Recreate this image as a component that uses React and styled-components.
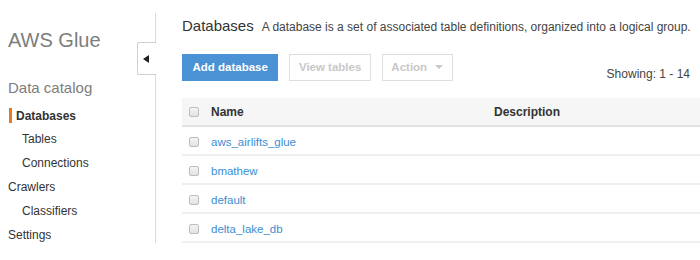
import React from 'react';
import styled, { createGlobalStyle } from 'styled-components';

const GlobalStyle = createGlobalStyle`
  body {
    margin: 0;
    background: #ffffff;
    font-family: "Liberation Sans", Arial, sans-serif;
    color: #444;
  }
`;

const navItems = [
  { label: 'Databases', level: 1, active: true },
  { label: 'Tables', level: 1 },
  { label: 'Connections', level: 1 },
  { label: 'Crawlers', level: 0 },
  { label: 'Classifiers', level: 1 },
  { label: 'Settings', level: 0 },
];

const databases = ['aws_airlifts_glue', 'bmathew', 'default', 'delta_lake_db'];

const App = () => (
  <>
    <GlobalStyle />
    <Page>
      <Sidebar>
        <Brand>AWS Glue</Brand>
        <Section>Data catalog</Section>
        {navItems.map(item => (
          <NavItem key={item.label} level={item.level} active={item.active}>
            {item.label}
          </NavItem>
        ))}
        {/* collapse handle sits over the divider line */}
        <CollapseTab>
          <svg width="6" height="8" viewBox="0 0 6 8">
            <polygon points="6,0 6,8 0,4" fill="#222" />
          </svg>
        </CollapseTab>
      </Sidebar>
      <Main>
        <Heading>
          <Title>Databases</Title>
          <Subtitle>A database is a set of associated table definitions, organized into a logical group.</Subtitle>
        </Heading>
        <Toolbar>
          <Button primary>Add database</Button>
          <Button disabled>View tables</Button>
          <Button disabled>
            Action
            <Caret />
          </Button>
          <Showing>Showing: 1 - 14</Showing>
        </Toolbar>
        <Table>
          <HeaderRow>
            <CheckCell>
              <Checkbox />
            </CheckCell>
            <NameCell bold>Name</NameCell>
            <DescCell bold>Description</DescCell>
          </HeaderRow>
          {databases.map(name => (
            <Row key={name}>
              <CheckCell>
                <Checkbox />
              </CheckCell>
              <NameCell>
                <Link>{name}</Link>
              </NameCell>
              <DescCell />
            </Row>
          ))}
        </Table>
      </Main>
    </Page>
  </>
);
export default App;

const Page = styled.div`
  display: flex;
  width: 700px;
  height: 260px;
  overflow: hidden;
`;

const Sidebar = styled.nav`
  position: relative;
  flex-shrink: 0;
  width: 156px;
  height: 230px;
  margin-top: 13px;
  border-right: 1px solid #dcdcdc;
  display: flex;
  flex-direction: column;
  padding-top: 14px;
  box-sizing: border-box;
`;

const Brand = styled.div`
  font-size: 20px;
  line-height: 26px;
  color: #7d7d7d;
  padding-left: 8px;
  margin-bottom: 24px;
`;

const Section = styled.div`
  font-size: 15px;
  line-height: 22px;
  color: #7d7d7d;
  padding-left: 8px;
  margin-bottom: 5px;
`;

const NavItem = styled.div`
  height: ${p => (p.active ? 23 : 24)}px;
  line-height: 24px;
  font-size: 12px;
  color: #333;
  font-weight: ${p => (p.active ? 'bold' : 'normal')};
  padding-left: ${p => (p.level ? 22 : 8)}px;
  ${p =>
    p.active &&
    `
    display: flex;
    align-items: center;
    padding-left: 9px;
    &::before {
      content: '';
      width: 3px;
      height: 15px;
      background: #e7781d;
      margin-right: 4px;
    }
  `}
`;

const CollapseTab = styled.div`
  position: absolute;
  right: -1px;
  top: 29px;
  width: 19px;
  height: 33px;
  background: #fff;
  border: 1px solid #cfcfcf;
  border-right: none;
  border-radius: 2px 0 0 2px;
  display: flex;
  align-items: center;
  justify-content: center;
  padding-right: 3px;
  box-sizing: border-box;
`;

const Main = styled.main`
  flex: 1;
  padding: 17px 0 0 26px;
  min-width: 0;
`;

const Heading = styled.div`
  display: flex;
  align-items: baseline;
  gap: 8px;
  white-space: nowrap;
`;

const Title = styled.span`
  font-size: 15px;
  color: #333;
`;

const Subtitle = styled.span`
  font-size: 12px;
  color: #444;
`;

const Toolbar = styled.div`
  display: flex;
  align-items: center;
  gap: 11px;
  margin-top: 19px;
`;

const Button = styled.div`
  height: 27px;
  box-sizing: border-box;
  display: flex;
  align-items: center;
  gap: 8px;
  padding: 0 ${p => (p.primary ? 9.5 : 8.5)}px;
  font-size: 11.5px;
  font-weight: bold;
  border: 1px solid ${p => (p.primary ? '#4a92d3' : '#dedede')};
  background: ${p => (p.primary ? '#4a92d3' : '#fff')};
  color: ${p => (p.primary ? '#fff' : '#c8c8c8')};
`;

const Caret = styled.span`
  width: 0;
  height: 0;
  border-left: 4px solid transparent;
  border-right: 4px solid transparent;
  border-top: 4px solid #c8c8c8;
`;

const Showing = styled.div`
  margin-left: auto;
  margin-right: 10px;
  margin-top: 14px;
  font-size: 12px;
  color: #444;
`;

const Table = styled.div`
  margin-top: 17px;
`;

const Row = styled.div`
  display: flex;
  align-items: center;
  height: 29px;
  padding-top: 2px;
  box-sizing: border-box;
  border-bottom: 2px solid #efefef;
  font-size: 12px;
`;

const HeaderRow = styled(Row)`
  padding-top: 0;
  background: #f6f6f6;
  border-bottom: 2px solid #e2e2e2;
  color: #333;
`;

const CheckCell = styled.div`
  width: 29px;
  padding-left: 7px;
  box-sizing: border-box;
  display: flex;
  align-items: center;
`;

const Checkbox = styled.span`
  width: 10px;
  height: 10px;
  box-sizing: border-box;
  border: 1px solid #bdbdbd;
  border-radius: 2px;
  background: linear-gradient(#f4f4f4, #e2e2e2);
`;

const NameCell = styled.div`
  width: 283px;
  font-weight: ${p => (p.bold ? 'bold' : 'normal')};
`;

const DescCell = styled.div`
  flex: 1;
  font-weight: ${p => (p.bold ? 'bold' : 'normal')};
`;

const Link = styled.span`
  color: #3c8ed3;
  font-size: 11.5px;
`;
